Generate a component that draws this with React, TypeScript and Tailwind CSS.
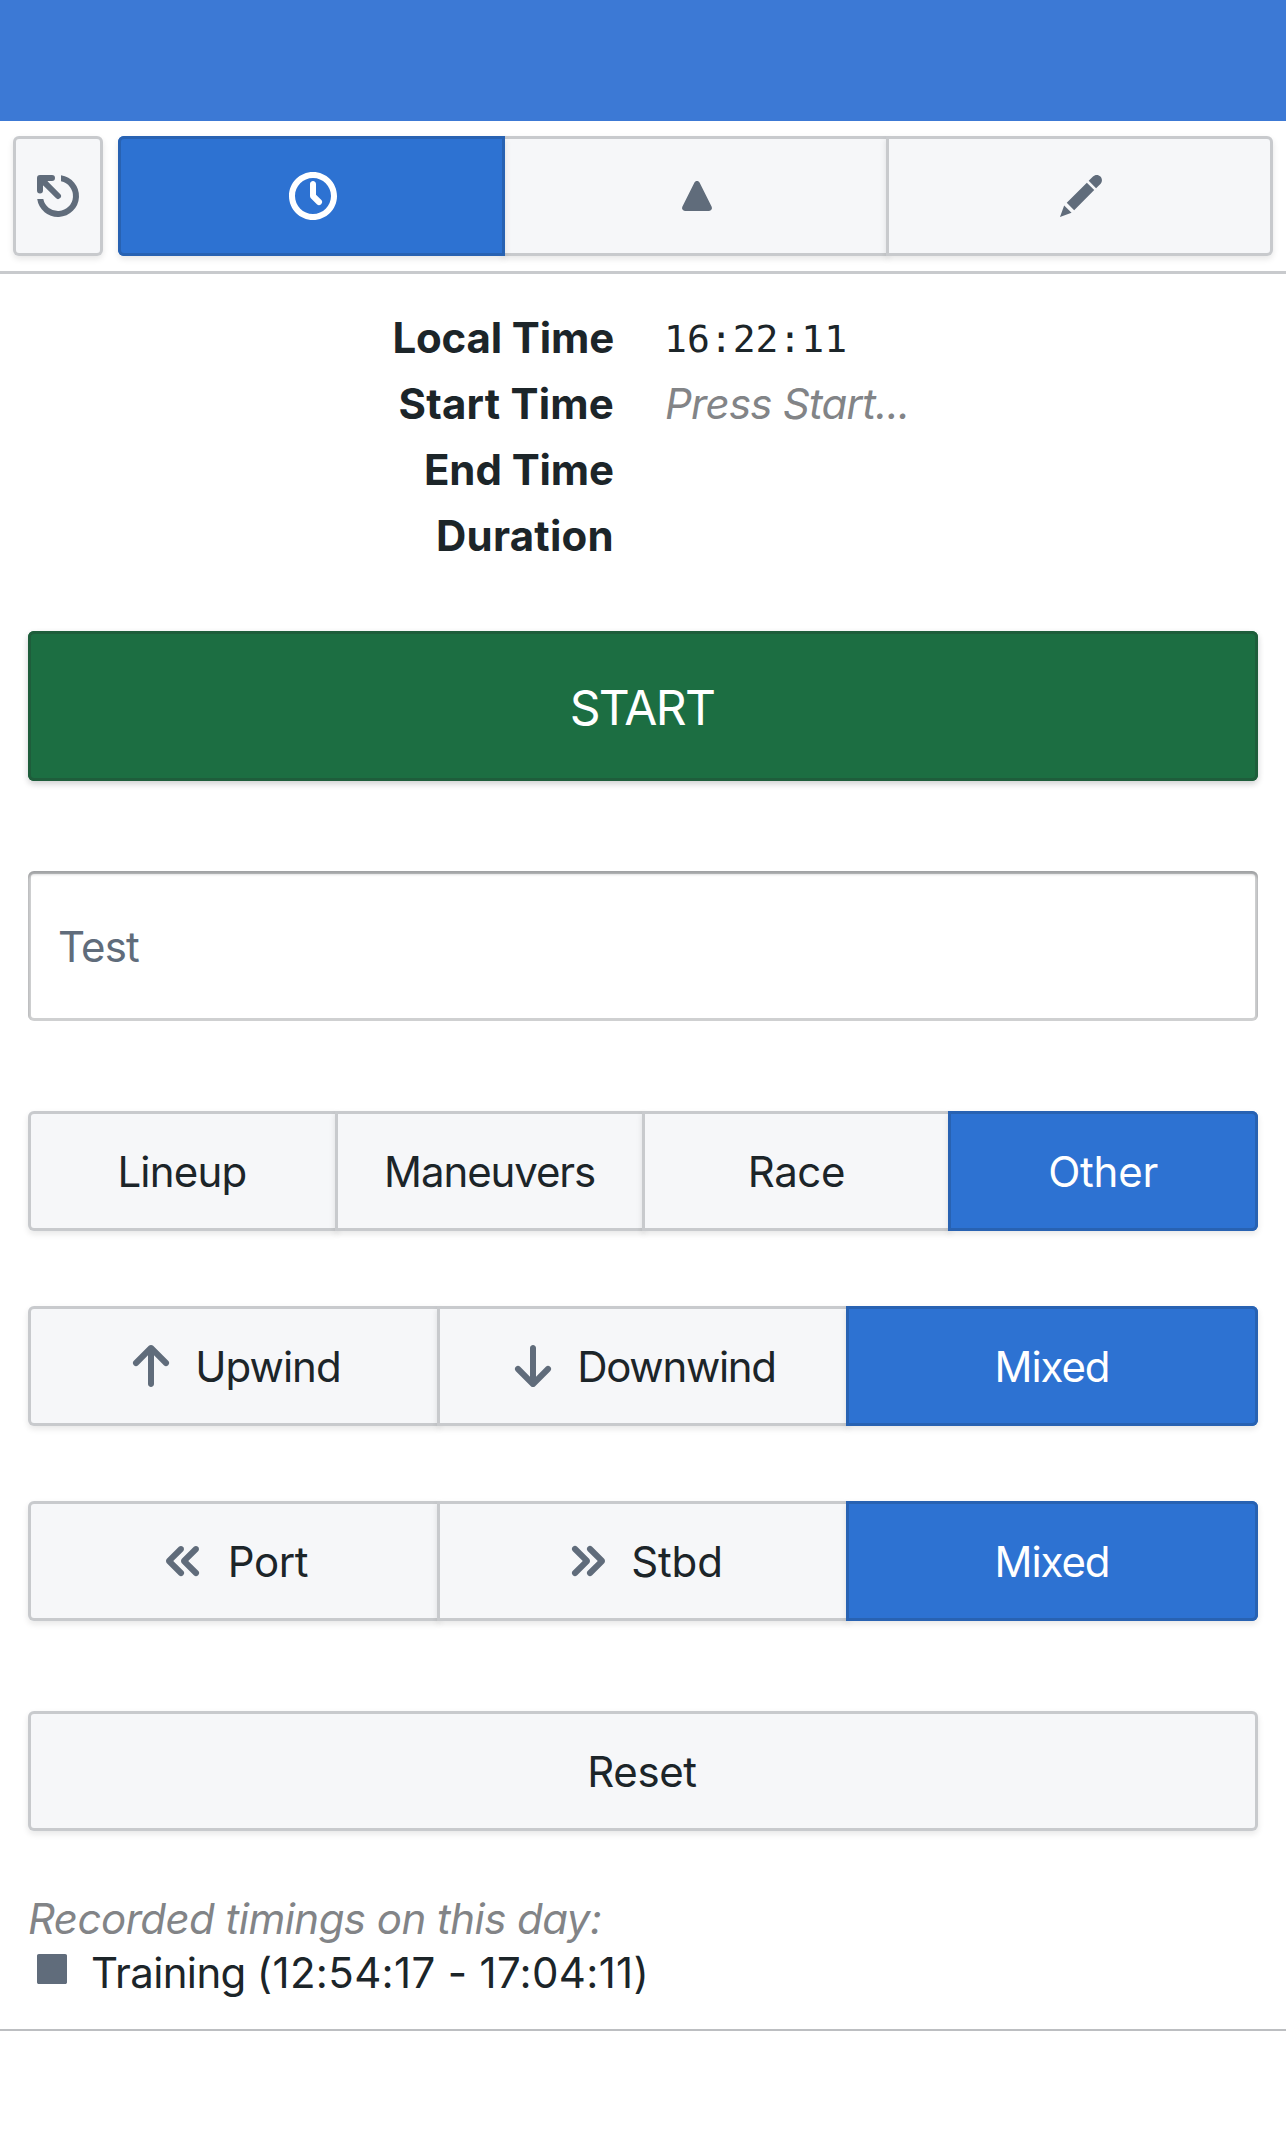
import React from 'react';

const ICONS = {
  time: 'M8 0C3.58 0 0 3.58 0 8s3.58 8 8 8 8-3.58 8-8-3.58-8-8-8zm0 14c-3.31 0-6-2.69-6-6s2.69-6 6-6 6 2.69 6 6-2.69 6-6 6zm1-6.41V4c0-.55-.45-1-1-1s-1 .45-1 1v4c0 .28.11.53.29.71l2 2a1.003 1.003 0 001.42-1.42L9 7.59z',
  edit: 'M3.25 10.26l2.47 2.47 6.69-6.69-2.46-2.48-6.7 6.7zM.99 14.99l3.86-1.39-2.46-2.44L.99 14.99zm12.25-14c-.48 0-.92.2-1.24.51l-1.44 1.44 2.47 2.47 1.44-1.44c.32-.32.51-.75.51-1.24.01-.95-.77-1.74-1.74-1.74z',
  triangle:
    'M12.89 11.56l-4-8c-.16-.33-.5-.56-.89-.56s-.73.23-.89.56l-4 8A1.003 1.003 0 004 13h8a1.003 1.003 0 00.89-1.44z',
  arrowUp:
    'M13.71 6.29l-5-5C8.53 1.11 8.28 1 8 1s-.53.11-.71.29l-5 5a1.003 1.003 0 001.42 1.42L7 4.41V14c0 .55.45 1 1 1s1-.45 1-1V4.41l3.29 3.3a1.003 1.003 0 001.42-1.42z',
  arrowDown:
    'M13.71 9.71l-5 5c-.18.18-.43.29-.71.29s-.53-.11-.71-.29l-5-5a1.003 1.003 0 011.42-1.42L7 11.59V2c0-.55.45-1 1-1s1 .45 1 1v9.59l3.29-3.3a1.003 1.003 0 011.42 1.42z',
  chevronsLeft:
    'M4.41 8l3.29-3.29c.19-.18.3-.43.3-.71a1.003 1.003 0 00-1.71-.71l-4 4C2.11 7.47 2 7.72 2 8c0 .28.11.53.29.71l4 4a1.003 1.003 0 001.42-1.42L4.41 8zm5 0l3.29-3.29c.19-.18.3-.43.3-.71a1.003 1.003 0 00-1.71-.71l-4 4C7.11 7.47 7 7.72 7 8c0 .28.11.53.29.71l4 4a1.003 1.003 0 001.42-1.42L9.41 8z',
  chevronsRight:
    'M8.71 7.29l-4-4a1.003 1.003 0 00-1.42 1.42L6.59 8l-3.3 3.29a1.003 1.003 0 001.42 1.42l4-4C8.89 8.53 9 8.28 9 8c0-.28-.11-.53-.29-.71zm5 0l-4-4a1.003 1.003 0 00-1.42 1.42L11.59 8l-3.3 3.29a1.003 1.003 0 001.42 1.42l4-4c.18-.18.29-.43.29-.71 0-.28-.11-.53-.29-.71z',
  square: 'M12.4 3H3.6c-.33 0-.6.27-.6.6v8.8c0 .33.27.6.6.6h8.8c.33 0 .6-.27.6-.6V3.6c0-.33-.27-.6-.6-.6z',
};

type IconName = keyof typeof ICONS;

function Icon({ name }: { name: IconName }) {
  return (
    <svg viewBox="0 0 16 16" className="size-12 shrink-0" fill="currentColor" aria-hidden="true">
      <path d={ICONS[name]} />
    </svg>
  );
}

function ResetIcon() {
  return (
    <svg viewBox="0 0 16 16" className="size-12 shrink-0" fill="currentColor" aria-hidden="true">
      <path d="M9 1.07A7 7 0 1 1 1.07 9H3.1A5 5 0 1 0 9 3.1z" />
      <path d="M1.4 1.4h2.8L4.6 4.2 4.2 4.6 1.4 4.2z" />
      <path
        d="M6 2H2v4.2M2.3 2.3L8 8"
        fill="none"
        stroke="currentColor"
        strokeWidth="2"
        strokeLinecap="round"
        strokeLinejoin="round"
      />
    </svg>
  );
}

interface Option {
  label?: string;
  tracking?: string;
  icon?: IconName;
  active?: boolean;
}

const GRAY_BUTTON =
  'bg-[#f6f7f9] text-[#1c2529] shadow-[inset_0_0_0_3px_#c8cacd,0_3px_6px_rgba(17,20,24,0.1)]';
const BLUE_BUTTON =
  'z-10 bg-[#2d72d2] text-white shadow-[inset_0_0_0_3px_#2862b2,0_3px_6px_rgba(17,20,24,0.1)]';

function ButtonGroup({ options }: { options: Option[] }) {
  return (
    <div className="flex grow">
      {options.map((o, i) => (
        <button
          key={i}
          type="button"
          className={`relative -mr-[3px] flex h-[120px] flex-1 basis-0 items-center justify-center gap-5 first:rounded-l-md last:mr-0 last:rounded-r-md ${
            o.label ? '' : 'pl-[3px]'
          } ${o.active ? BLUE_BUTTON : GRAY_BUTTON}`}
        >
          {o.icon && (
            <span className={o.active ? 'text-white' : 'text-[#606c7b]'}>
              <Icon name={o.icon} />
            </span>
          )}
          {o.label && <span className={`pt-0.5 ${o.tracking}`}>{o.label}</span>}
        </button>
      ))}
    </div>
  );
}

function TimeRow({ label, tracking, children }: { label: string; tracking: string; children?: React.ReactNode }) {
  return (
    <div className="flex h-[66px] items-center gap-[50px] pt-px">
      <div className={`w-[586px] text-right font-bold ${tracking}`}>{label}</div>
      <div>{children}</div>
    </div>
  );
}

export default function App() {
  return (
    <div className="min-h-[2150px] bg-white font-['Inter',sans-serif] text-[42px] leading-[54px] text-[#1c2529]">
      <header className="h-[121px] bg-[#3c79d5]" />

      <nav className="flex h-[153px] gap-[15px] border-b-[3px] border-[#c8cacd] px-[13px] pt-[15px]">
        <button
          type="button"
          className={`flex h-[120px] w-[90px] items-center justify-center rounded-md ${GRAY_BUTTON}`}
        >
          <span className="text-[#606c7b]">
            <ResetIcon />
          </span>
        </button>
        <ButtonGroup options={[{ icon: 'time', active: true }, { icon: 'triangle' }, { icon: 'edit' }]} />
      </nav>

      <main className="border-b-2 border-[#bcbec1] px-7 pt-[30px] pb-[29px]">
        <section>
          <TimeRow label="Local Time" tracking="tracking-[-0.15px]">
            <span className="font-['DejaVu_Sans_Mono',monospace] text-[38px]">16:22:11</span>
          </TimeRow>
          <TimeRow label="Start Time" tracking="tracking-[0.2px]">
            <span className="pl-px tracking-[-0.75px] text-[#828487] italic">Press Start...</span>
          </TimeRow>
          <TimeRow label="End Time" tracking="tracking-[-0.1px]" />
          <TimeRow label="Duration" tracking="tracking-[0.25px]" />
        </section>

        <button
          type="button"
          className="mt-[63px] flex h-[150px] w-full items-center justify-center rounded-md bg-[#1c6e42] pt-1 pr-0.5 text-[48px] tracking-[-1.6px] text-white shadow-[inset_0_0_0_3px_#1e5d3b,0_3px_6px_rgba(17,20,24,0.2)]"
        >
          START
        </button>

        <input
          type="text"
          placeholder="Test"
          className="mt-[90px] block h-[150px] w-full rounded-md bg-white px-[30px] tracking-[-0.8px] shadow-[inset_0_0_0_3px_rgba(17,20,24,0.2),inset_0_3px_3px_rgba(17,20,24,0.25)] placeholder:text-[#606c7b] placeholder:opacity-100"
        />

        <div className="mt-[90px] flex flex-col gap-[75px]">
          <ButtonGroup
            options={[
              { label: 'Lineup', tracking: 'pr-0.5 tracking-[-0.8px]' },
              { label: 'Maneuvers', tracking: 'tracking-[-1.1px]' },
              { label: 'Race', tracking: 'tracking-[-0.4px]' },
              { label: 'Other', tracking: 'tracking-[-0.2px]', active: true },
            ]}
          />
          <ButtonGroup
            options={[
              { label: 'Upwind', icon: 'arrowUp', tracking: 'tracking-[-1px]' },
              { label: 'Downwind', icon: 'arrowDown', tracking: 'pr-px tracking-[-1.3px]' },
              { label: 'Mixed', tracking: 'tracking-[-1.1px]', active: true },
            ]}
          />
          <ButtonGroup
            options={[
              { label: 'Port', icon: 'chevronsLeft', tracking: 'tracking-[-0.4px]' },
              { label: 'Stbd', icon: 'chevronsRight', tracking: 'tracking-[-0.2px]' },
              { label: 'Mixed', tracking: 'tracking-[-1.1px]', active: true },
            ]}
          />
        </div>

        <button
          type="button"
          className={`mt-[90px] flex h-[120px] w-full items-center justify-center rounded-md pt-0.5 pr-0.5 tracking-[-0.4px] ${GRAY_BUTTON}`}
        >
          Reset
        </button>

        <section className="mt-[60px]">
          <p className="pt-px tracking-[-0.54px] text-[#828487] italic">Recorded timings on this day:</p>
          <p className="-mt-px flex gap-[15px]">
            <span className="text-[#606c7b]">
              <Icon name="square" />
            </span>
            <span className="pt-px">
              <span className="tracking-[-0.65px]">Training </span>
              <span className="tracking-[0.33px]">(12:54:17 - 17:04:11)</span>
            </span>
          </p>
        </section>
      </main>
    </div>
  );
}
